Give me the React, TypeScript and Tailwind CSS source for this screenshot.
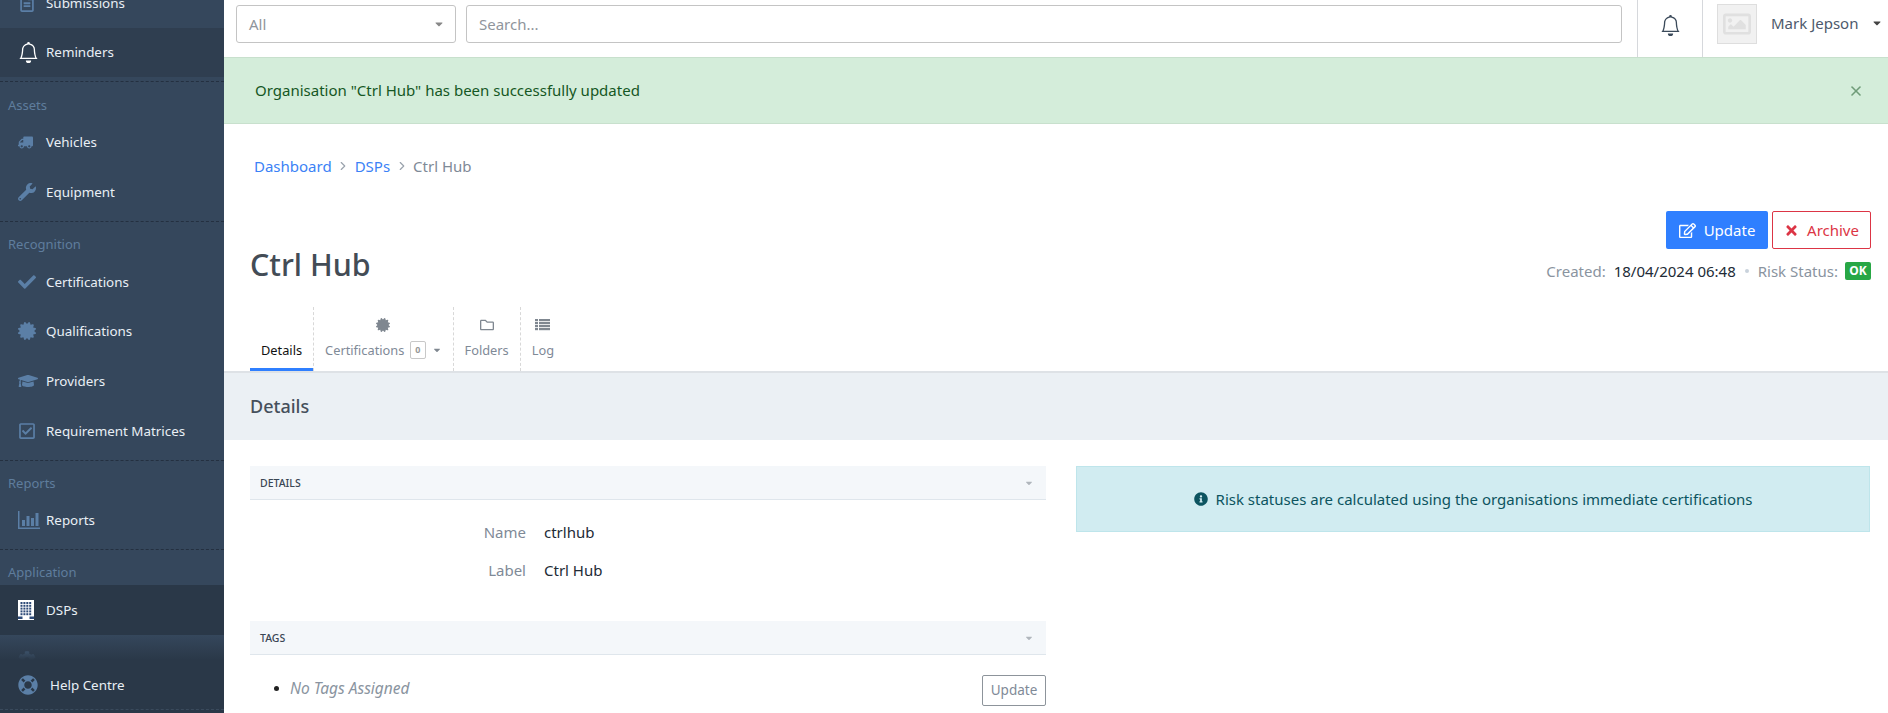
import {
  FaCaretDown,
  FaCertificate,
  FaCheck,
  FaCog,
  FaGraduationCap,
  FaInfoCircle,
  FaLifeRing,
  FaRegCheckSquare,
  FaRegEdit,
  FaRegFileAlt,
  FaRegFolder,
  FaRegImage,
  FaTimes,
  FaTruck,
  FaWrench,
} from 'react-icons/fa';
import { BsBell } from 'react-icons/bs';
import { ChevronRight, X } from 'lucide-react';
import type { ReactNode } from 'react';

function BarChartIcon() {
  return (
    <svg width="22" height="18" viewBox="0 0 22 18" fill="currentColor">
      <rect x="0" y="0" width="1.5" height="18" />
      <rect x="0" y="16.5" width="22" height="1.5" />
      <rect x="4" y="9" width="3" height="6" />
      <rect x="8.5" y="5" width="3" height="10" />
      <rect x="13" y="7" width="3" height="8" />
      <rect x="17.5" y="2" width="3" height="13" />
    </svg>
  );
}

function BuildingIcon() {
  const windows = [];
  for (let r = 0; r < 5; r++) {
    for (let c = 0; c < 4; c++) {
      windows.push(<rect key={`${r}-${c}`} x={2.5 + c * 2.9} y={2 + r * 2.8} width="2" height="2" fill="#2d4a78" />);
    }
  }
  return (
    <svg width="16" height="20" viewBox="0 0 16 20">
      <rect width="16" height="20" fill="#fff" />
      {windows}
      <rect x="0" y="16.5" width="4.5" height="2.5" fill="#2d4a78" />
      <rect x="11.5" y="16.5" width="4.5" height="2.5" fill="#2d4a78" />
    </svg>
  );
}

function LogIcon() {
  return (
    <svg width="15" height="12" viewBox="0 0 15 12" fill="currentColor">
      {[0, 3, 6, 9].map((y) => (
        <g key={y}>
          <rect x="0" y={y} width="3" height="2.2" />
          <rect x="4" y={y} width="11" height="2.2" />
        </g>
      ))}
    </svg>
  );
}

function NavItem({ icon, label, active, dark }: { icon: ReactNode; label?: string; active?: boolean; dark?: boolean }) {
  return (
    <div className={`flex h-[49.7px] items-center pl-[18px] text-[13.4px] ${active ? 'bg-[#2f3e50]' : ''} ${dark ? 'bg-[#2a3848]' : ''}`}>
      <span className={`flex w-[28px] shrink-0 text-[18px] ${active || dark ? 'text-white' : 'text-[#5b7fa6]'}`}>{icon}</span>
      <span className="text-[#e9eff5]">{label}</span>
    </div>
  );
}

function NavGroup({ title, children }: { title: string; children: ReactNode }) {
  return (
    <div className="border-b border-dashed border-[#243040] pb-[4px]">
      <div className="flex h-[35px] items-end pb-[2px] pl-[8px] text-[13px] text-[#5f7d9d]">{title}</div>
      {children}
    </div>
  );
}

function Sidebar() {
  return (
    <aside className="relative flex h-full w-[224px] shrink-0 flex-col bg-[#35475c]">
      <nav className="min-h-0 flex-1 overflow-hidden">
        <div className="mt-[-22px] border-b border-dashed border-[#243040] pb-[4px]">
          <NavItem icon={<FaRegFileAlt />} label="Submissions" />
          <NavItem icon={<BsBell className="text-[21px]" />} label="Reminders" active />
        </div>
        <NavGroup title="Assets">
          <NavItem icon={<FaTruck className="-scale-x-100 text-[15px]" />} label="Vehicles" />
          <NavItem icon={<FaWrench />} label="Equipment" />
        </NavGroup>
        <NavGroup title="Recognition">
          <NavItem icon={<FaCheck />} label="Certifications" />
          <NavItem icon={<FaCertificate />} label="Qualifications" />
          <NavItem icon={<FaGraduationCap className="text-[20px]" />} label="Providers" />
          <NavItem icon={<FaRegCheckSquare />} label="Requirement Matrices" />
        </NavGroup>
        <NavGroup title="Reports">
          <NavItem icon={<BarChartIcon />} label="Reports" />
        </NavGroup>
        <div>
          <div className="flex h-[35px] items-end pb-[3px] pl-[8px] text-[13px] text-[#5f7d9d]">Application</div>
          <NavItem icon={<BuildingIcon />} label="DSPs" dark />
          <NavItem icon={<FaCog />} />
        </div>
      </nav>
      {/* fade over the scrolled nav */}
      <div className="pointer-events-none absolute bottom-[53px] left-0 h-[25px] w-full bg-gradient-to-b from-transparent to-[#2a3848]" />
      <div className="relative flex h-[53px] flex-col bg-[#2a3848]">
        <div className="flex flex-1 items-center pl-[18px] pt-[1px] text-[13.4px] text-[#e9eff5]">
          <FaLifeRing className="text-[20px] text-[#5b7fa6]" />
          <span className="ml-[12px]">Help Centre</span>
        </div>
        <div className="mb-[3px] border-b border-dashed border-[#3a4a5c]" />
      </div>
    </aside>
  );
}

function TopBar() {
  return (
    <header className="flex h-[57px] shrink-0 items-stretch bg-white">
      <div className="flex flex-1 items-start gap-[10px] pl-[12px] pr-[15px] pt-[5px]">
        <div className="flex h-[38px] w-[220px] shrink-0 items-center justify-between rounded-[3px] border border-[#c4c4c4] pl-[12px] pr-[10px] text-[15px] text-[#8f959c]">
          All
          <FaCaretDown className="text-[12px] text-[#888]" />
        </div>
        <div className="flex h-[38px] flex-1 items-center rounded-[3px] border border-[#c4c4c4] pl-[12px] text-[15px] text-[#8f959c]">Search...</div>
      </div>
      <div className="flex w-[66px] items-center justify-center border-x border-[#d6d8dc] pb-[6px]">
        <BsBell className="text-[21px] text-[#3b4a5a]" />
      </div>
      <div className="flex grow-0 basis-[185px] items-start pl-[14px] pt-[4px]">
        <div className="flex h-[40px] w-[40px] items-center justify-center border border-[#dedede] bg-[#f1f1f1]">
          <FaRegImage className="text-[28px] text-[#e0e0e0]" />
        </div>
        <span className="ml-[14px] mt-[9px] text-[15px] leading-[20px] text-[#4d5a6c]">Mark Jepson</span>
        <FaCaretDown className="ml-[13px] mt-[13px] text-[12px] text-[#444]" />
      </div>
    </header>
  );
}

function PanelHead({ title }: { title: string }) {
  return (
    <div className="flex h-[34px] items-center justify-between border-b border-[#dfe6ec] bg-[#f4f7fa] pl-[10px] pr-[12px]">
      <span className="pt-[2px] text-[10.5px] font-medium uppercase text-[#3a4654]">{title}</span>
      <FaCaretDown className="text-[10px] text-[#b0b6bc]" />
    </div>
  );
}

function Tab({ icon, label, active, children }: { icon?: ReactNode; label: string; active?: boolean; children?: ReactNode }) {
  return (
    <div className={`relative flex h-full flex-col items-center justify-end px-[11px] pb-[12px] text-[12.8px] leading-[18px] ${active ? 'text-[#111]' : 'border-l border-dashed border-[#d8d8d8] text-[#7f8a97]'}`}>
      {icon && <span className="mb-[9px] flex h-[14px] items-center text-[14px] text-[#7f8790]">{icon}</span>}
      <div className="flex items-center">
        {label}
        {children}
      </div>
      {active && <div className="absolute bottom-0 left-0 h-[3px] w-full bg-[#2f7fff]" />}
    </div>
  );
}

export default function App() {
  return (
    <div className="flex h-[713px] overflow-hidden bg-white font-['Noto_Sans',sans-serif]">
      <Sidebar />
      <main className="flex min-w-0 flex-1 flex-col">
        <TopBar />
        <div className="flex h-[67px] shrink-0 items-center justify-between border-y border-[#c8e0cd] bg-[#d4edda] pl-[31px] pr-[24px] text-[15px] text-[#155724]">
          Organisation "Ctrl Hub" has been successfully updated
          <X size={16} strokeWidth={2.4} className="text-[#6f9c78]" />
        </div>

        <div className="flex h-[183px] shrink-0 flex-col px-[26px]">
          <div className="mt-[32px] flex items-center pl-[4px] text-[15px] leading-[20px]">
            <span className="text-[#3b82f6]">Dashboard</span>
            <ChevronRight size={14} className="mx-[4.5px] text-[#9aa3ad]" />
            <span className="text-[#3b82f6]">DSPs</span>
            <ChevronRight size={14} className="mx-[4.5px] text-[#9aa3ad]" />
            <span className="text-[#7f8a97]">Ctrl Hub</span>
          </div>
          <div className="mt-[35px] flex items-start justify-between">
            <h1 className="mt-[35px] text-[30.4px] font-medium leading-[38px] text-[#434c56]">Ctrl Hub</h1>
            <div className="mr-[-9px] flex flex-col items-end">
              <div className="flex gap-[4px]">
                <button className="flex h-[38px] w-[102px] items-center justify-center gap-[8px] rounded-[2px] bg-[#2f7fff] text-[15px] text-white">
                  <FaRegEdit className="text-[17px]" />
                  Update
                </button>
                <button className="flex h-[38px] w-[99px] items-center justify-center gap-[8px] rounded-[2px] border border-[#dc3545] text-[15px] text-[#dc3545]">
                  <FaTimes className="text-[15px]" />
                  Archive
                </button>
              </div>
              <div className="mt-[12px] flex h-[20px] items-center text-[15px] text-[#8a94a0]">
                Created:
                <span className="ml-[8px] text-[#222b36]">18/04/2024 06:48</span>
                <span className="mx-[9px] h-[4px] w-[4px] rounded-full bg-[#c9d2dc]" />
                Risk Status:
                <span className="ml-[7px] flex h-[18px] w-[26px] items-center justify-center rounded-[2px] bg-[#28a745] text-[12px] font-bold text-white">OK</span>
              </div>
            </div>
          </div>
        </div>

        <div className="flex h-[66px] shrink-0 items-stretch border-b-2 border-[#dee2e6] pl-[26px]">
          <Tab label="Details" active />
          <Tab icon={<FaCertificate />} label="Certifications">
            <span className="ml-[6px] rounded-[2px] border border-[#c8c8c8] px-[4px] text-[9px] font-bold leading-[16px] text-[#999]">0</span>
            <FaCaretDown className="ml-[6px] text-[10px] text-[#7f8790]" />
          </Tab>
          <Tab icon={<FaRegFolder />} label="Folders" />
          <Tab icon={<LogIcon />} label="Log" />
        </div>

        <div className="flex h-[67px] shrink-0 items-center bg-[#ebf0f4] pl-[26px] text-[18px] font-medium text-[#454f5b]">Details</div>

        <div className="grid grid-cols-[796px_794px] gap-[30px] pl-[26px] pt-[26px]">
          <section>
            <PanelHead title="Details" />
            <dl className="mt-[21px] grid grid-cols-[276px_1fr] gap-x-[18px] gap-y-[16px] text-[15px] leading-[22px]">
              <dt className="text-right text-[#7f8a97]">Name</dt>
              <dd className="text-[#222b36]">ctrlhub</dd>
              <dt className="text-right text-[#7f8a97]">Label</dt>
              <dd className="text-[#222b36]">Ctrl Hub</dd>
            </dl>
            <div className="mt-[40px]">
              <PanelHead title="Tags" />
              <div className="mt-[20px] flex items-start justify-between">
                <div className="mt-[2px] flex items-center pl-[24px] text-[15.5px] italic leading-[22px] text-[#8a94a0]">
                  <span className="mr-[11px] h-[5px] w-[5px] rounded-full bg-[#222]" />
                  No Tags Assigned
                </div>
                <button className="h-[31px] w-[64px] rounded-[2px] border border-[#8d949b] text-[13.5px] text-[#7f8a97]">Update</button>
              </div>
            </div>
          </section>
          <section>
            <div className="flex h-[66px] items-center justify-center gap-[8px] border border-[#bee5eb] bg-[#d1ecf1] text-[15px] text-[#0c5460]">
              <FaInfoCircle className="text-[14px]" />
              Risk statuses are calculated using the organisations immediate certifications
            </div>
          </section>
        </div>
      </main>
    </div>
  );
}
